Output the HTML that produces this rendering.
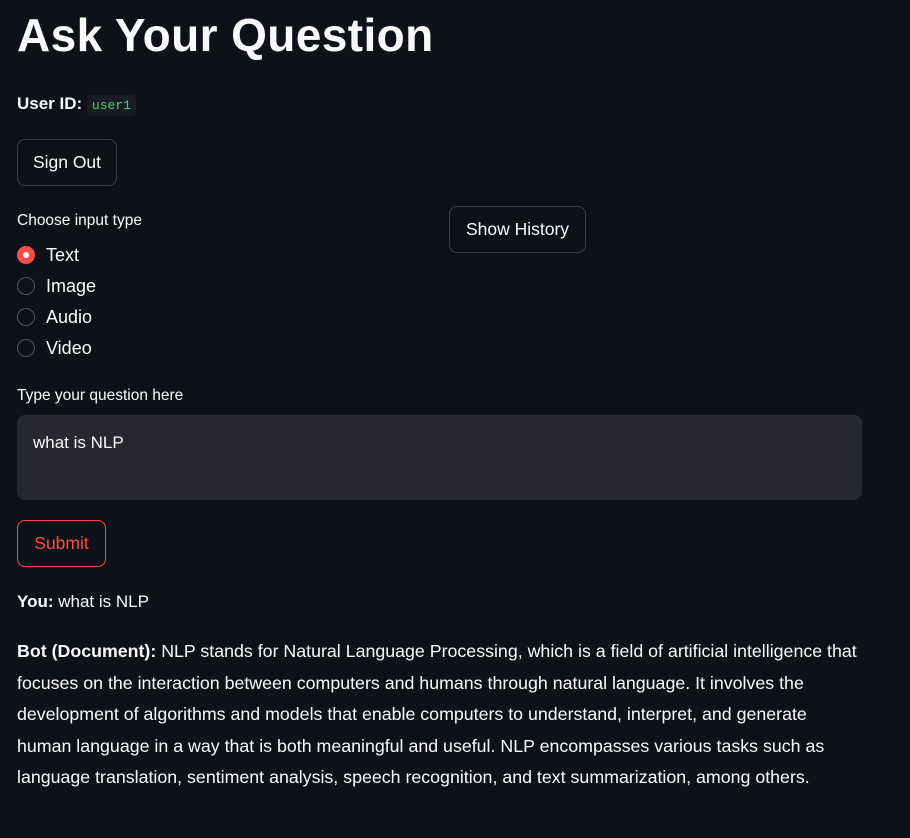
<!DOCTYPE html>
<html><head><meta charset="utf-8"><style>
body{margin:0;width:910px;height:838px;background:#0e1117;color:#fafafa;font-family:"Liberation Sans",sans-serif;position:relative;overflow:hidden}
.a{position:absolute;white-space:nowrap}
h1{position:absolute;left:17px;top:8px;margin:0;font-size:46px;font-weight:bold;letter-spacing:0.4px}
.btn{position:absolute;border:1px solid rgba(250,250,250,0.2);border-radius:8px;box-sizing:border-box;display:flex;align-items:center;justify-content:center;font-size:17.5px;background:#0e1117}
.r{position:absolute;left:17px;width:18px;height:18px;border-radius:50%;box-sizing:border-box;border:1px solid rgba(250,250,250,0.3)}
.rl{position:absolute;left:46px;font-size:18px}
code{font-family:"Liberation Mono",monospace;font-size:13px;color:#3dd56d;background:#1a1c24;padding:3px 5px;border-radius:4px}
.p{left:17px;font-size:17.8px;line-height:31.6px}
</style></head><body>
<h1>Ask Your Question</h1>
<div class="a" style="left:17px;top:94px;font-size:17px"><b>User ID:</b> <code>user1</code></div>
<div class="btn" style="left:17px;top:139px;width:100px;height:47px">Sign Out</div>
<div class="a" style="left:17px;top:212px;font-size:15.5px">Choose input type</div>
<div class="btn" style="left:449px;top:206px;width:137px;height:47px">Show History</div>
<div class="r" style="top:246px;background:#ff4b4b;border:none"><div style="position:absolute;left:6px;top:6px;width:6px;height:6px;border-radius:50%;background:#fff"></div></div>
<div class="rl" style="top:245px">Text</div>
<div class="r" style="top:277px"></div><div class="rl" style="top:276px">Image</div>
<div class="r" style="top:308px"></div><div class="rl" style="top:307px">Audio</div>
<div class="r" style="top:339px"></div><div class="rl" style="top:338px">Video</div>
<div class="a" style="left:17px;top:387px;font-size:15.5px">Type your question here</div>
<div class="a" style="left:17px;top:415px;width:845px;height:85px;background:#262730;border-radius:8px"></div>
<div class="a" style="left:33px;top:433px;font-size:17px">what is NLP</div>
<div class="btn" style="left:17px;top:520px;width:89px;height:47px;border-color:#ff4b4b;color:#ff4b4b">Submit</div>
<div class="a" style="left:17px;top:592px;font-size:17px"><b>You:</b> what is NLP</div>
<div class="a p" style="top:636px"><b>Bot (Document):</b> NLP stands for Natural Language Processing, which is a field of artificial intelligence that<br>focuses on the interaction between computers and humans through natural language. It involves the<br>development of algorithms and models that enable computers to understand, interpret, and generate<br>human language in a way that is both meaningful and useful. NLP encompasses various tasks such as<br>language translation, sentiment analysis, speech recognition, and text summarization, among others.</div>
</body></html>
